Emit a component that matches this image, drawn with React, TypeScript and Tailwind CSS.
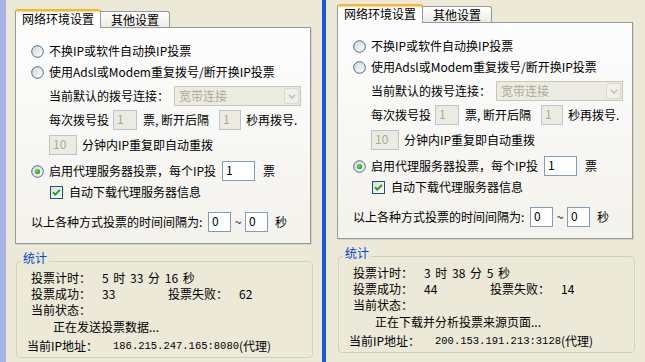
import React from "react";

type S = { time: string; ok: string; fail: string; status: string; ip: string };

function Radio({ checked = false }: { checked?: boolean }) {
  return (
    <svg width="13" height="13" viewBox="0 0 13 13" className="shrink-0">
      <defs>
        <linearGradient id="radg" x1="0" y1="0" x2="1" y2="1">
          <stop offset="0" stopColor="#d6d5cc" />
          <stop offset="1" stopColor="#ffffff" />
        </linearGradient>
        <radialGradient id="rdot" cx="0.4" cy="0.4" r="0.6">
          <stop offset="0" stopColor="#6fe36f" />
          <stop offset="1" stopColor="#1f9a1f" />
        </radialGradient>
      </defs>
      <circle cx="6.5" cy="6.5" r="5.8" fill="url(#radg)" stroke="#3b6a99" strokeWidth="1" />
      {checked && <circle cx="6.5" cy="6.5" r="2.6" fill="url(#rdot)" />}
    </svg>
  );
}

function Check() {
  return (
    <svg width="13" height="13" viewBox="0 0 13 13" className="shrink-0">
      <defs>
        <linearGradient id="chkg" x1="0" y1="0" x2="1" y2="1">
          <stop offset="0" stopColor="#dcdbd2" />
          <stop offset="1" stopColor="#ffffff" />
        </linearGradient>
      </defs>
      <rect x="0.5" y="0.5" width="12" height="12" fill="url(#chkg)" stroke="#1c5180" />
      <path d="M3 6.2 L5.2 8.6 L10 3.9" stroke="#21a121" strokeWidth="2" fill="none" />
    </svg>
  );
}

function Edit({ value, disabled = false, className }: { value: string; disabled?: boolean; className: string }) {
  return (
    <div
      className={`h-[20px] border flex items-center pl-[3px] pb-[2px] text-[12px] leading-[12px] ${
        disabled ? "border-[#b9c4cf] bg-[#ecebe2] text-[#aca899]" : "border-[#7f9db9] bg-white text-black"
      } ${className}`}
    >
      {value}
    </div>
  );
}

function Combo() {
  return (
    <div className="w-[127px] h-[20px] border border-[#c9c7ba] bg-[#ecebe2] flex items-center justify-between pl-[4px] pr-px">
      <span className="text-[#aca899]">宽带连接</span>
      <div className="w-[15px] h-[16px] rounded-[2px] bg-[#f0efea] border border-[#dad8cf] flex items-center justify-center">
        <svg width="8" height="5" viewBox="0 0 8 5">
          <path d="M0.8 0.8 L4 4 L7.2 0.8" stroke="#c3c1b6" strokeWidth="1.6" fill="none" />
        </svg>
      </div>
    </div>
  );
}

function Dialog({ s }: { s: S }) {
  return (
    <div className="flex flex-col w-[297px] text-[12px] leading-[14px] text-black">
      {/* tabs */}
      <div className="flex items-end h-[18px] relative z-10">
        <div className="w-[86px] h-[19px] -mb-px bg-white border-x border-[#919b9c] border-t-[2px] border-t-[#f5b63a] rounded-t-[3px] flex items-center justify-center pb-[1px] shadow-[inset_0_1px_0_#ffd77a]">
          网络环境设置
        </div>
        <div className="w-[69px] h-[16px] bg-gradient-to-b from-white to-[#ecebe4] border-t border-r border-[#919b9c] rounded-tr-[3px] flex items-center justify-center">
          其他设置
        </div>
      </div>
      {/* tab page */}
      <div className="w-[296px] h-[217px] border border-[#919b9c] bg-gradient-to-b from-[#fdfdfe] to-[#f3f2ec] shadow-[1px_1px_0_#d5d3c6] flex flex-col pl-[15px] pt-[13px]">
        <div className="h-[20px] flex items-center gap-[5px]">
          <Radio />
          <span>不换IP或软件自动换IP投票</span>
        </div>
        <div className="h-[20px] mt-[1px] flex items-center gap-[5px]">
          <Radio />
          <span>使用Adsl或Modem重复拨号/断开换IP投票</span>
        </div>
        <div className="h-[20px] mt-[4px] ml-[18px] flex items-center">
          <span className="w-[125px]">当前默认的拨号连接：</span>
          <Combo />
        </div>
        <div className="h-[20px] mt-[4px] ml-[18px] flex items-center">
          <span className="w-[64px]">每次拨号投</span>
          <Edit value="1" disabled className="w-[24px]" />
          <span className="w-[76px] ml-[6px]">票, 断开后隔</span>
          <Edit value="1" disabled className="w-[22px]" />
          <span className="ml-[5px]">秒再拨号.</span>
        </div>
        <div className="h-[20px] mt-[5px] ml-[18px] flex items-center">
          <Edit value="10" disabled className="w-[28px]" />
          <span className="ml-[5px]">分钟内IP重复即自动重拨</span>
        </div>
        <div className="h-[20px] mt-[6px] flex items-center">
          <Radio checked />
          <span className="w-[173px] ml-[5px]">启用代理服务器投票，每个IP投</span>
          <Edit value="1" className="w-[33px]" />
          <span className="ml-[8px]">票</span>
        </div>
        <div className="h-[18px] mt-[2px] ml-[19px] flex items-center gap-[6px]">
          <Check />
          <span>自动下载代理服务器信息</span>
        </div>
        <div className="h-[20px] mt-[11px] flex items-center">
          <span className="w-[177px]">以上各种方式投票的时间间隔为:</span>
          <Edit value="0" className="w-[23px]" />
          <span className="w-[14px] text-center">~</span>
          <Edit value="0" className="w-[23px]" />
          <span className="ml-[7px]">秒</span>
        </div>
      </div>
      {/* stats group */}
      <fieldset className="mt-[8px] ml-[1px] w-[297px] border border-[#d0d0bf] rounded-[4px] px-0 pb-[3px]">
        <legend className="ml-[4px] px-[2px] pb-[6px] text-[12px] leading-[12px] text-[#0046d5]">统计</legend>
        <div className="flex flex-col pl-[14px]">
          <div className="h-[16px] flex items-center">
            <span className="w-[71px]">投票计时：</span>
            <span className="[word-spacing:2px]">{s.time}</span>
          </div>
          <div className="h-[16px] flex items-center">
            <span className="w-[71px]">投票成功：</span>
            <span className="w-[66px]">{s.ok}</span>
            <span className="w-[71px]">投票失败：</span>
            <span>{s.fail}</span>
          </div>
          <div className="h-[16px] flex items-center">
            <span>当前状态：</span>
          </div>
          <div className="h-[16px] mt-[1px] flex items-center pl-[22px]">
            <span>{s.status}</span>
          </div>
          <div className="h-[16px] mt-[3px] -ml-[4px] flex items-center">
            <span className="w-[86px]">当前IP地址：</span>
            <span className="font-['Liberation_Mono',monospace] text-[10.5px]">{s.ip}</span>
            <span>(代理)</span>
          </div>
        </div>
      </fieldset>
    </div>
  );
}

export default function App() {
  return (
    <div className="w-[645px] h-[362px] overflow-hidden flex bg-[#ece9d8] font-['Noto_Sans_CJK_SC','Noto_Sans',sans-serif]">
      <div className="w-[322px] h-[362px] border-l-[6px] border-[#a8b4e6] pl-[9px] pt-[9px] overflow-hidden">
        <Dialog
          s={{
            time: "5 时 33 分 16 秒",
            ok: "33",
            fail: "62",
            status: "正在发送投票数据...",
            ip: "186.215.247.165:8080",
          }}
        />
      </div>
      <div className="w-[4px] h-[362px] bg-[#1a55dc]" />
      <div className="w-[319px] h-[362px] pl-[11px] pt-[4px] overflow-hidden">
        <Dialog
          s={{
            time: "3 时 38 分 5 秒",
            ok: "44",
            fail: "14",
            status: "正在下载并分析投票来源页面...",
            ip: "200.153.191.213:3128",
          }}
        />
      </div>
    </div>
  );
}
